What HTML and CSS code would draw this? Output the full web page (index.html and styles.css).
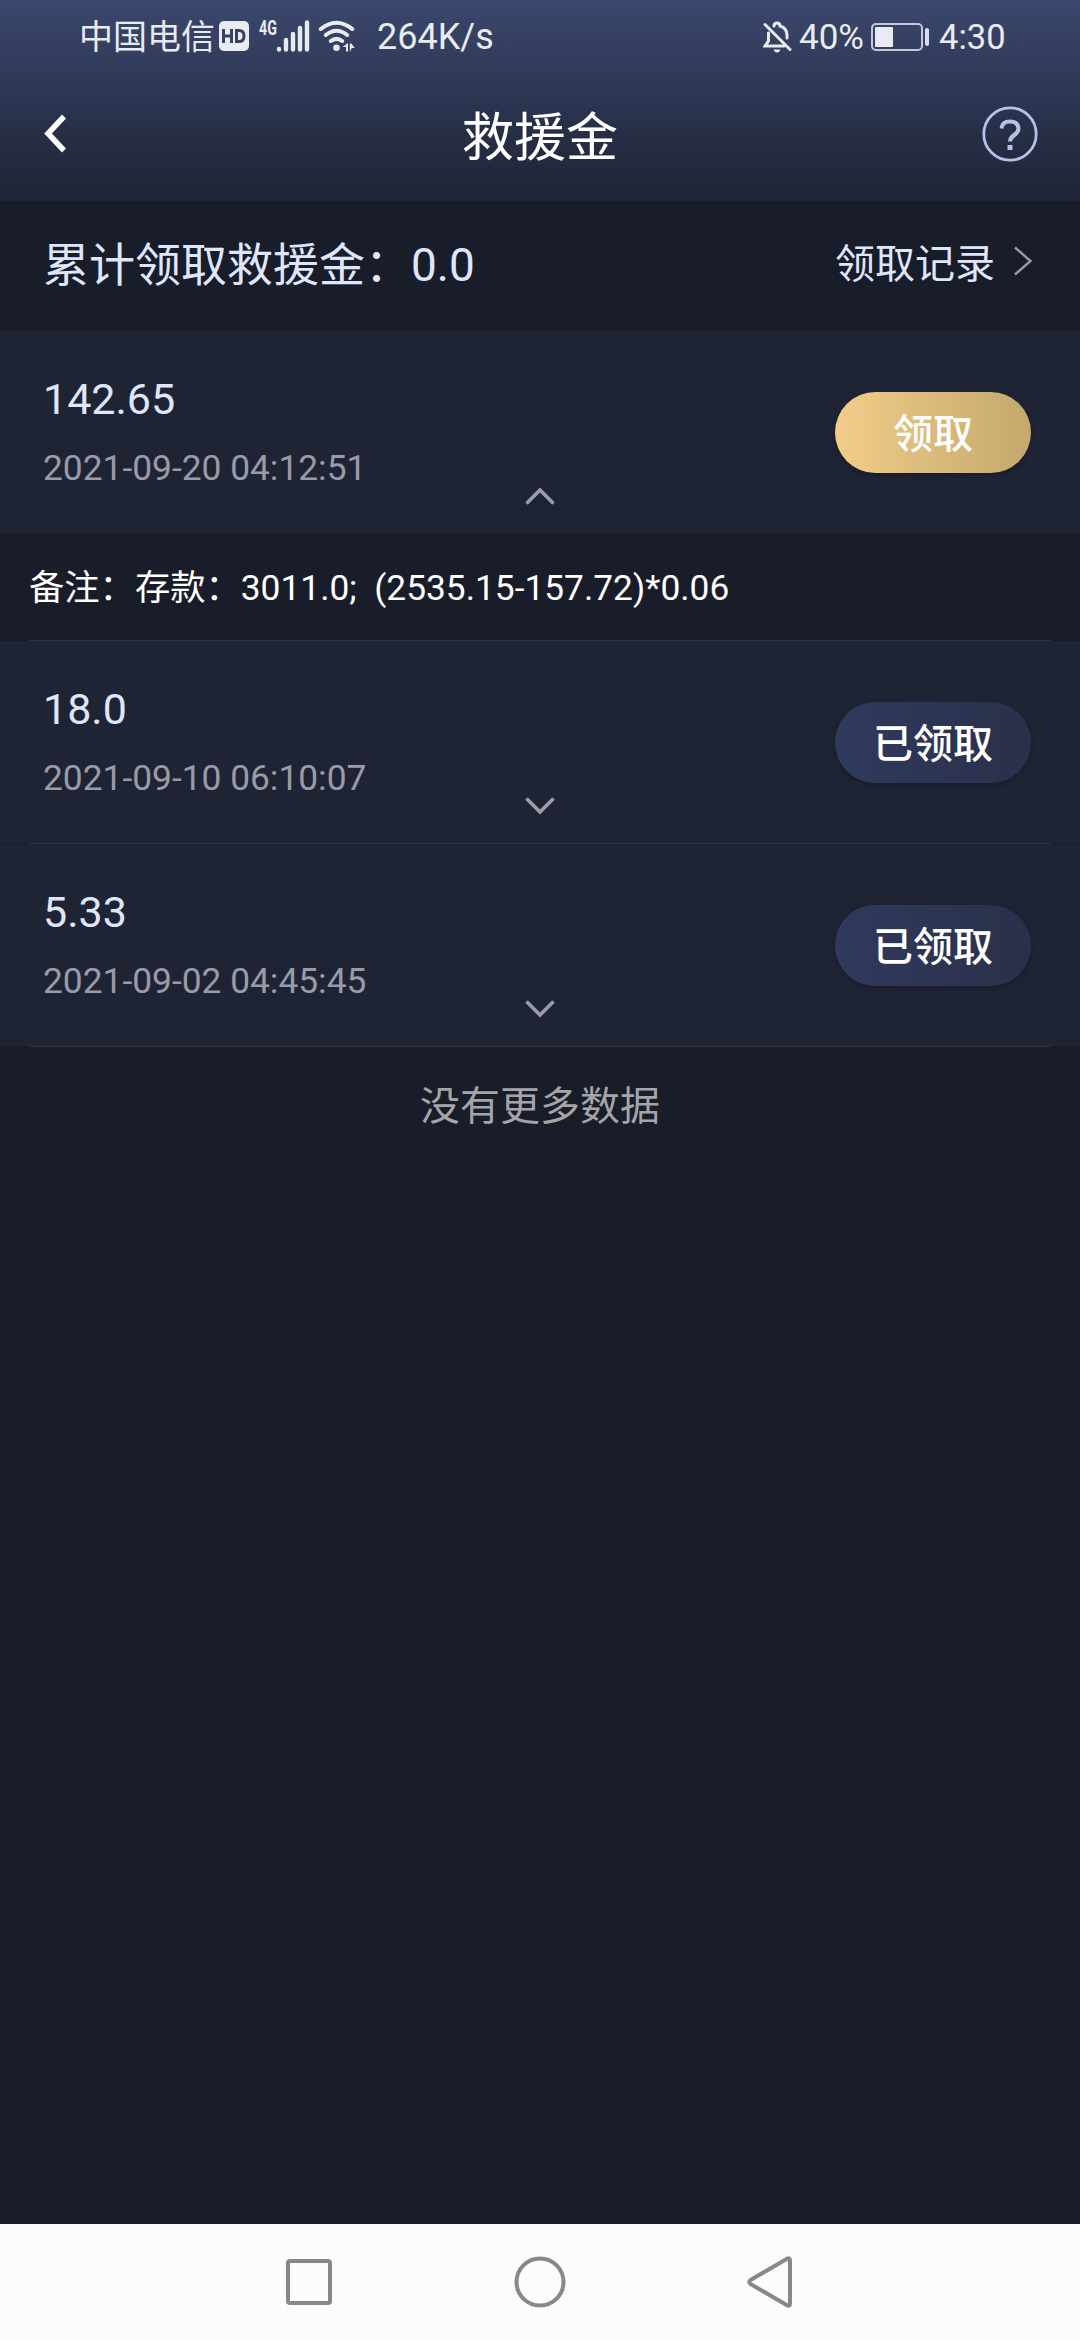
FILE: index.html
```html
<!DOCTYPE html>
<html lang="zh-CN">
<head>
<meta charset="utf-8">
<title>救援金</title>
<link rel="stylesheet" href="styles.css">
</head>
<body>
<div class="screen">
  <header class="top">
    <div class="status">
      <span class="carrier">中国电信</span>
      <svg class="hd" width="30" height="30" viewBox="0 0 30 30"><rect width="30" height="30" rx="5" fill="#e9ebf3"/><path d="M4.500 8v14M12.500 8v14M4.500 15h8M17.500 9.400h2.500q5 0 5 5.600t-5 5.600h-2.500z" fill="none" stroke="#364164" stroke-width="3"/></svg>
      <span class="net">4G</span>
      <svg class="signal" width="34" height="32" viewBox="0 0 34 32"><path d="M3 29v.5M10 20v9.500M17 14v15.500M24 8v21.500M31 2.500v27" stroke="#e9ebf3" stroke-width="4.400" stroke-linecap="round"/></svg>
      <svg class="wifi" width="38" height="32" viewBox="0 0 38 32"><g fill="none" stroke="#e9ebf3" stroke-width="4" stroke-linecap="round"><path d="M2.800 9Q18.500-3.500 34.200 9"/><path d="M7.800 15Q18.500 6.500 29.200 15"/><path d="M12.800 21Q18.500 16.800 24.200 21"/></g><circle cx="18.500" cy="27.700" r="3.300" fill="#e9ebf3"/><path d="M30 23v8.500h-2v-4.500h-3.500zM31.800 32v-8.500h1.500l3.500 4.500h-3z" fill="#e9ebf3"/></svg>
      <span class="speed">264K/s</span>
      <svg class="bell" width="30" height="32" viewBox="0 0 30 32"><g fill="none" stroke="#e9ebf3" stroke-width="3" stroke-linecap="round"><path d="M2 3.500 27 28.500"/><path d="M5.500 12v8l-3.500 5h19M11 5q0-3 3-3t3 3q7 2 7 9v3"/></g><path d="M10.500 28.500h7q-1 3-3.500 3t-3.500-3z" fill="#e9ebf3"/></svg>
      <span class="percent">40%</span>
      <svg class="battery" width="59" height="28" viewBox="0 0 59 28"><rect x="1" y="1" width="50" height="26" rx="4" fill="none" stroke="#c3c8da" stroke-width="2"/><rect x="4" y="4" width="18" height="20" rx="1" fill="#e9ebf3"/><rect x="54" y="5" width="4" height="18" rx="2" fill="#d9ddea"/></svg>
      <span class="time">4:30</span>
    </div>
    <div class="titlebar">
      <svg class="back" width="24" height="40" viewBox="0 0 24 40"><path d="M21 2.500 5 19.500 21 36.500" fill="none" stroke="#fff" stroke-width="5.500"/></svg>
      <h1>救援金</h1>
      <svg class="help" width="56" height="56" viewBox="0 0 56 56"><circle cx="28" cy="28" r="26.200" fill="none" stroke="#b9c0e8" stroke-width="2.800"/><path d="M19.500 22.500q.5-7 8.500-7t8.500 7q0 3.500-4.250 6.500t-4.250 6.500" fill="none" stroke="#b9c0e8" stroke-width="4"/><rect x="25.500" y="39" width="5" height="5" fill="#b9c0e8"/></svg>
    </div>
  </header>

  <section class="summary">
    <span class="total">累计领取救援金：0.0</span>
    <a class="history">领取记录<svg width="20" height="32" viewBox="0 0 20 32"><path d="M2 2.500 17.500 16 2 29.500" fill="none" stroke="#999ba3" stroke-width="2.400"/></svg></a>
  </section>

  <main class="list">
    <article class="row">
      <div class="info"><div class="amount">142.65</div><div class="date">2021-09-20 04:12:51</div></div>
      <svg class="toggle" width="32" height="20" viewBox="0 0 32 20"><path d="M2.500 17.500 16 4 29.500 17.500" fill="none" stroke="#9c9ca8" stroke-width="3.700"/></svg>
      <button class="btn claim">领取</button>
    </article>
    <p class="note">备注：存款：3011.0;&nbsp; (2535.15-157.72)*0.06</p>
    <hr class="rule">
    <article class="row">
      <div class="info"><div class="amount">18.0</div><div class="date">2021-09-10 06:10:07</div></div>
      <svg class="toggle" width="32" height="20" viewBox="0 0 32 20"><path d="M2.500 2.500 16 16 29.500 2.500" fill="none" stroke="#9c9ca8" stroke-width="3.700"/></svg>
      <button class="btn claimed">已领取</button>
    </article>
    <hr class="rule">
    <article class="row">
      <div class="info"><div class="amount">5.33</div><div class="date">2021-09-02 04:45:45</div></div>
      <svg class="toggle" width="32" height="20" viewBox="0 0 32 20"><path d="M2.500 2.500 16 16 29.500 2.500" fill="none" stroke="#9c9ca8" stroke-width="3.700"/></svg>
      <button class="btn claimed">已领取</button>
    </article>
    <hr class="rule">
    <p class="end">没有更多数据</p>
  </main>

  <nav class="navbar">
    <svg width="52" height="52" viewBox="0 0 52 52"><rect x="5" y="5" width="42" height="42" rx="2" fill="none" stroke="#888" stroke-width="4"/></svg>
    <svg width="52" height="52" viewBox="0 0 52 52"><circle cx="26" cy="26" r="23.500" fill="none" stroke="#888" stroke-width="4"/></svg>
    <svg width="52" height="52" viewBox="0 0 52 52"><path d="M42.500 2.500Q45 1.500 45 4.500V47.500Q45 50.500 42.500 49.500L5.500 28Q3 26 5.500 24Z" fill="none" stroke="#888" stroke-width="4" stroke-linejoin="round"/></svg>
  </nav>
</div>
</body>
</html>
```
FILE: styles.css
```css
* { box-sizing: border-box; margin: 0; padding: 0; }

body {
  background: #191c29;
  font-family: Roboto, "Noto Sans CJK SC", sans-serif;
}

svg { display: block; flex: none; }

.screen {
  width: 1080px;
  height: 2340px;
  display: flex;
  flex-direction: column;
  overflow: hidden;
}

.top {
  height: 201px;
  background: linear-gradient(#3b476c, #2f3957 42%, #272f47 65%, #1f2435);
}

.status {
  height: 74px;
  display: flex;
  align-items: center;
  padding-left: 79px;
  color: #e9ebf3;
  font-size: 35px;
  white-space: nowrap;
}

.carrier { width: 140px; font-size: 34px; line-height: 74px; }
.hd { margin-top: -2px; }
.net {
  width: 17px;
  margin: -19px 0 0 10px;
  font-size: 21px;
  font-weight: 700;
  line-height: 24px;
  transform: scaleX(.68);
  transform-origin: left;
}
.signal { margin: -2px 8px 0 0; }
.wifi { margin-top: -2px; }
.speed { width: 120px; margin-left: 21px; font-size: 36px; }
.bell { margin-left: 266px; }
.percent { width: 65px; margin-left: 6px; }
.battery { margin-left: 7px; }
.time { margin-left: 9px; font-size: 34.5px; }

.titlebar {
  height: 120px;
  display: flex;
  align-items: center;
  justify-content: space-between;
  padding: 0 42px 0 43px;
}

.titlebar h1 { padding-top: 9px; color: #fff; font-size: 52px; font-weight: 400; line-height: 60px; }
.back { margin-right: 31px; }

.summary {
  height: 130px;
  display: flex;
  align-items: center;
  justify-content: space-between;
  padding: 0 47px 11px 43px;
  color: #dfe6fc;
}

.total { font-size: 46px; }
.history { display: flex; align-items: center; gap: 18px; font-size: 40px; }

.row {
  height: 202px;
  display: grid;
  grid-template-columns: 1fr 32px 1fr;
  background: #1f2435;
  padding: 0 49px 0 43px;
}

.info { padding-top: 43px; white-space: nowrap; }
.amount { color: #dfe6fc; font-size: 43px; line-height: 50px; }
.date { margin-top: 24px; color: #9a9ba7; font-size: 35.35px; line-height: 41px; }
.toggle { align-self: end; margin: 0 0 27px 3px; }

.btn {
  justify-self: end;
  margin-top: 61px;
  width: 196px;
  height: 81px;
  padding-top: 4px;
  border: 0;
  border-radius: 41px;
  color: #fff;
  font: 500 40px/77px Roboto, "Noto Sans CJK SC", sans-serif;
  box-shadow: 0 2px 5px rgba(12, 14, 26, .4);
}

.claim { background: linear-gradient(90deg, #f1cd88, #c4a86d); }
.claimed { background: linear-gradient(90deg, #303a5d, #2a304a); }

.note { height: 107px; padding: 2px 0 0 29px; color: #fff; font-size: 35.3px; line-height: 107px; }
.rule { height: 1px; margin: 0 29px; border: 0; background: #303344; }
.end { height: 118px; padding-top: 1px; color: #a5a5a8; font-size: 40px; line-height: 118px; text-align: center; }

.navbar {
  height: 116px;
  margin-top: auto;
  display: flex;
  justify-content: center;
  align-items: center;
  gap: 179px;
  background: #fcfcfc;
}
```
